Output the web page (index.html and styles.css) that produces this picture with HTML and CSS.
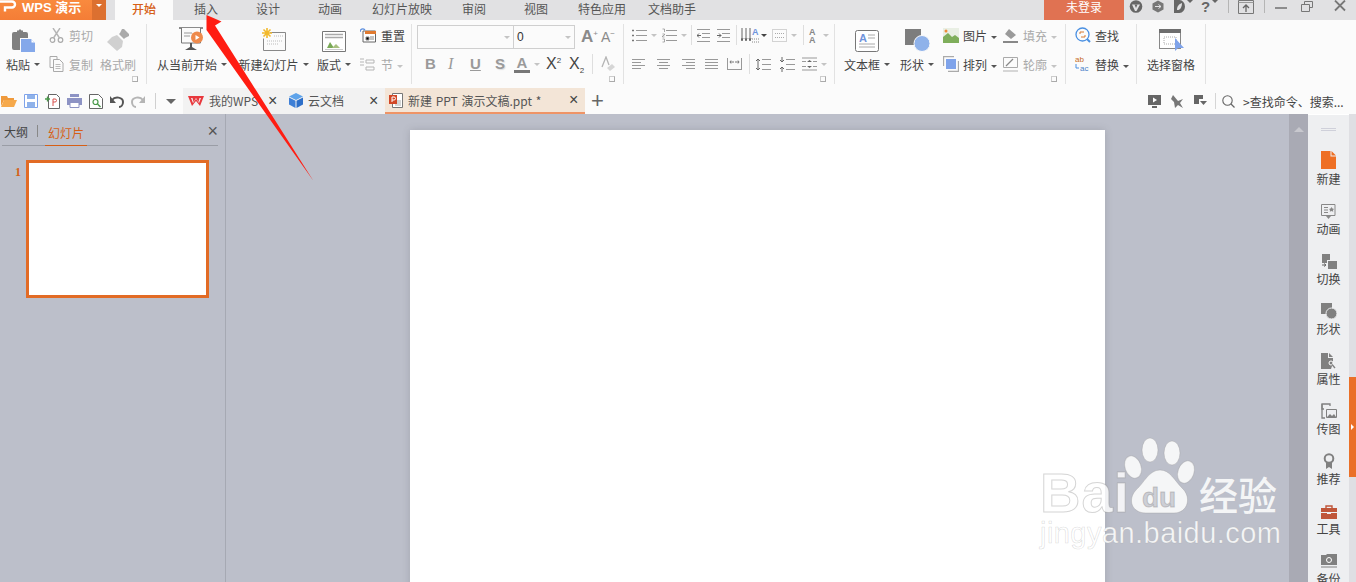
FILE: index.html
```html
<!DOCTYPE html>
<html lang="zh-CN">
<head>
<meta charset="utf-8">
<title>WPS 演示</title>
<link rel="stylesheet" href="styles.css">
</head>
<body>
<div class="app">
  <header class="titlebar">
    <div class="brand">
      <svg class="brand-logo" width="18" height="12" viewBox="0 0 18 12"><path d="M0 1.500h12a3 3 0 0 1 0 6H5v4" fill="none" stroke="#fff" stroke-width="2.400"/></svg>
      <span class="brand-name">WPS 演示</span>
    </div>
    <div class="brand-drop"><i class="caret white"></i></div>
    <nav class="menu">
      <span class="m58 active">开始</span>
      <span class="m66">插入</span>
      <span class="m58">设计</span>
      <span class="m66">动画</span>
      <span class="m78">幻灯片放映</span>
      <span class="m66">审阅</span>
      <span class="m58">视图</span>
      <span class="m74">特色应用</span>
      <span class="m66">文档助手</span>
    </nav>
    <div class="login">未登录</div>
    <div class="winbtns">
      <svg class="w22" width="14" height="14" viewBox="0 0 14 14"><circle cx="7" cy="6.500" r="6.300" fill="#666"/><path d="M3 4.500h8L7.500 11H6z" fill="#e1e1e3"/><path d="M5.500 4.500h3L7 8z" fill="#666"/></svg>
      <svg class="w22" width="14" height="14" viewBox="0 0 14 14"><path d="M7 .500 12.500 3.500v6L7 12.500l-5.500-3v-6z" fill="#777"/><path d="M4 6.500h6M7.500 4.500l2.500 2-2.500 2" stroke="#e1e1e3" fill="none"/></svg>
      <span class="winmenu d"><svg width="11" height="13" viewBox="0 0 11 13"><path d="M0 0h5.500a5.500 6.500 0 0 1 0 13H0z" fill="#666"/><path d="M3 10c0-4 2-6 5-7 0 3-1 6-3.500 7z" fill="#e1e1e3"/></svg><i class="caret small"></i></span>
      <span class="winmenu help">?<i class="caret small"></i></span>
      <span class="wsep"></span>
      <svg class="w34" width="16" height="14" viewBox="0 0 16 14"><path d="M.5.500h15v13H.500z" fill="none" stroke="#777"/><path d="M.5 2.500h15" stroke="#999"/><path d="M8 12V5M5 8l3-3 3 3" fill="none" stroke="#666" stroke-width="1.300"/></svg>
      <span class="wsep"></span>
      <svg class="w34b" width="12" height="12" viewBox="0 0 12 12"><path d="M0 8h12" stroke="#777" stroke-width="1.600"/></svg>
      <svg class="w26b" width="12" height="12" viewBox="0 0 12 12"><path d="M.5 4.500h8v7h-8zM3.500 4.500v-3h8v6h-3" fill="none" stroke="#777"/></svg>
      <svg class="w34c" width="12" height="12" viewBox="0 0 12 12"><path d="M1 .500l10 10M11 .500 1 10.500" stroke="#777" stroke-width="1.800"/></svg>
    </div>
  </header>

  <section class="ribbon">
    <div class="group g1">
      <div class="bigicon">
        <svg width="25" height="23" viewBox="0 0 25 23"><path d="M1 5a2 2 0 0 1 2-2h3V1.500h1.500L9 0l1.500 1.500H12V3h3a2 2 0 0 1 2 2v4H9v12H3a2 2 0 0 1-2-2z" fill="#808080"/><path d="M10 10h10l4 4v9H10z" fill="#84a8ea"/><path d="M20.500 10.500v3h3z" fill="#fff"/></svg>
      </div>
      <div class="small dim">
        <svg width="15" height="15" viewBox="0 0 15 15"><circle cx="3.500" cy="12" r="2.300" fill="none" stroke="#aaa" stroke-width="1.200"/><circle cx="11.500" cy="12" r="2.300" fill="none" stroke="#aaa" stroke-width="1.200"/><path d="M4.500 10 11 0M10.500 10 4 0" stroke="#b5b5b5" stroke-width="1.400"/></svg>
        <span>剪切</span>
      </div>
      <div class="bigicon">
        <svg width="24" height="24" viewBox="0 0 24 24"><path d="M16 1l2 0 5 5 0 2-4 2-1 1-5-5 1-1z" fill="#aaa"/><path d="M11 7l6 6-1 6-5 4-10-9 5-5z" fill="#d0d0d0"/></svg>
      </div>
      <div class="label">粘贴<i class="caret"></i></div>
      <div class="small dim">
        <svg width="15" height="16" viewBox="0 0 15 16"><path d="M1 .500h7v3M1 .500v11h3M4.500 3.500h6l3.500 3.500v8.500H4.500z" fill="none" stroke="#aaa"/><path d="M6.500 8.500h5M6.500 10.500h5M6.500 12.500h5" stroke="#bbb"/></svg>
        <span>复制</span>
      </div>
      <div class="label dim">格式刷</div>
      <i class="launcher"></i>
    </div>

    <div class="group g2">
      <div class="bigicon">
        <svg width="26" height="25" viewBox="0 0 26 25"><path d="M0 1h24" stroke="#666" stroke-width="1.500"/><path d="M2.500 1v15h19V1" fill="#fbfbfb" stroke="#777"/><path d="M5 6h8M5 9h6" stroke="#999"/><circle cx="18" cy="10.500" r="6" fill="#ee8a4c"/><path d="M16.500 8v5l4-2.500z" fill="#fff"/><path d="M11 16h2v4h-2zM6 23l5-3h2l5 3z" fill="#555"/></svg>
      </div>
      <div class="bigicon">
        <svg width="24" height="24" viewBox="0 0 24 24"><path d="M8 4.500h15.500v18h-22v-12" fill="#fbfbfb" stroke="#888"/><path d="M12 8h9M5 13h16M5 16h11" stroke="#bbb" stroke-dasharray="1 1"/><path d="M5 0v10M0 5h10M1.500 1.500l7 7M8.500 1.500l-7 7" stroke="#f2b92c" stroke-width="1.600"/></svg>
      </div>
      <div class="bigicon">
        <svg width="24" height="21" viewBox="0 0 24 21"><path d="M.5.500h23v20H.500z" fill="#fff" stroke="#777"/><path d="M3 3.500h18M3 6.500h18" stroke="#aaa" stroke-width="1.300"/><path d="M5 17l3-6 4 6z" fill="#79a956"/><path d="M10 17l4-4 4 4z" fill="#a8c080"/><path d="M3 18.500h18" stroke="#ccc"/></svg>
      </div>
      <div class="small">
        <svg width="16" height="15" viewBox="0 0 16 15"><path d="M3 3h12.500v11H3z" fill="#fff" stroke="#666"/><path d="M5 3h11v3H5z" fill="#e07a30"/><path d="M6 9h3v3H6zM10 9h4M10 11h4" stroke="#888"/><path d="M0 4c0-3 3-4 5-2" fill="none" stroke="#5d8fdf" stroke-width="1.300"/></svg>
        <span>重置</span>
      </div>
      <div class="label">从当前开始<i class="caret"></i></div>
      <div class="label">新建幻灯片<i class="caret"></i></div>
      <div class="label">版式<i class="caret"></i></div>
      <div class="small dim">
        <svg width="16" height="15" viewBox="0 0 16 15"><path d="M0 2h4M0 5h4M0 8h4M6 3h8v3H6zM6 10h8v3H6z" fill="none" stroke="#b5b5b5"/></svg>
        <span>节<i class="caret light"></i></span>
      </div>
    </div>

    <div class="group g3">
      <div class="fontrow">
        <div class="combo wide"><i class="caret light"></i></div>
        <div class="combo narrow"><span>0</span><i class="caret light"></i></div>
        <span class="grow up">A<sup>+</sup></span>
        <span class="grow dn">A<sup>−</sup></span>
      </div>
      <div class="fmtrow">
        <span class="f b">B</span>
        <span class="f i">I</span>
        <span class="f u">U</span>
        <span class="f s">S</span>
        <span class="f col">A</span><i class="caret light"></i>
        <span class="f x">X<sup>2</sup></span>
        <span class="f x">X<sub>2</sub></span>
        <span class="vline"></span>
        <svg class="eraser" width="15" height="16" viewBox="0 0 15 16"><path d="M1 11 5 1l3 8" fill="none" stroke="#b5b5b5" stroke-width="1.300"/><path d="M6 12l5-4 3 3-5 4z" fill="#d6d6d6"/></svg>
      </div>
      <i class="launcher"></i>
    </div>

    <div class="group g4">
      <div class="iconrow top">
        <svg class="ic" width="15" height="13" viewBox="0 0 15 13"><path d="M4 1.500h11M4 6.500h11M4 11.500h11" stroke="#999"/><path d="M0 1.500h2M1 .5v2M0 6.500h2M1 5.500v2M0 11.500h2M1 10.500v2" stroke="#777"/></svg><i class="caret light"></i>
        <svg class="ic ml5" width="15" height="15" viewBox="0 0 15 15"><path d="M4 2.500h11M4 7.500h11M4 12.500h11" stroke="#999"/><path d="M.5 1h2v3M.5 6h2v1l-2 1v1h2M.5 11h2v3h-2" fill="none" stroke="#888" stroke-width=".7"/></svg><i class="caret light"></i>
        <span class="vline ml4"></span>
        <svg class="ic ml5" width="13" height="13" viewBox="0 0 13 13"><path d="M0 .5h13M5 4.500h8M5 8.500h8M0 12.500h13" stroke="#999"/><path d="M4 6.500H0M2 4.500l-2 2 2 2" fill="none" stroke="#666"/></svg>
        <svg class="ic ml7" width="13" height="13" viewBox="0 0 13 13"><path d="M0 .5h13M5 4.500h8M5 8.500h8M0 12.500h13" stroke="#999"/><path d="M0 6.500h4M2 4.500l2 2-2 2" fill="none" stroke="#666"/></svg>
        <span class="vline ml6"></span>
        <svg class="ic ml4" width="19" height="16" viewBox="0 0 19 16"><path d="M1 1v12M5 1v12M9 1v12" stroke="#666"/><path d="M0 11l1 3 1-3M4 11l1 3 1-3M8 11l1 3 1-3" stroke="#666" fill="none"/><text class="tinya" x="11" y="8">A</text><path d="M11 12h8M11 15h8" stroke="#888" stroke-dasharray="1 1"/></svg><i class="caret dark tight"></i>
        <svg class="ic ml5" width="15" height="13" viewBox="0 0 15 13"><path d="M.5.500h14v12H.500z" fill="none" stroke="#aaa" stroke-dasharray="1 1"/><path d="M3 4.500h9M3 8.500h9" stroke="#aaa" stroke-dasharray="1 1"/></svg><i class="caret light"></i>
        <span class="vline ml6"></span>
        <svg class="ic ml3" width="12" height="15" viewBox="0 0 12 15"><text class="tinya gray" x="2" y="7">A</text><text class="tinya gray" x="2" y="15">A</text></svg><i class="caret light"></i>
      </div>
      <div class="iconrow bottom">
        <svg class="ic" width="13" height="11" viewBox="0 0 13 11"><path d="M0 .5h13M0 3.500h9M0 6.500h13M0 9.500h9" stroke="#999"/></svg>
        <svg class="ic ml12" width="13" height="11" viewBox="0 0 13 11"><path d="M0 .5h13M2 3.500h9M0 6.500h13M2 9.500h9" stroke="#999"/></svg>
        <svg class="ic ml12" width="13" height="11" viewBox="0 0 13 11"><path d="M0 .5h13M4 3.500h9M0 6.500h13M4 9.500h9" stroke="#999"/></svg>
        <svg class="ic ml10" width="13" height="11" viewBox="0 0 13 11"><path d="M0 .5h13M0 3.500h13M0 6.500h13M0 9.500h13" stroke="#999"/></svg>
        <svg class="ic ml9" width="15" height="12" viewBox="0 0 15 12"><path d="M.5 0v12M14.500 0v12M0 11.500h15" stroke="#999"/><path d="M3 4h4M4 2.500 3 4l1 1.500M12 4H8M11 2.500 12 4l-1 1.500" fill="none" stroke="#777"/></svg>
        <span class="vline ml7"></span>
        <svg class="ic ml5" width="16" height="15" viewBox="0 0 16 15"><path d="M7 2.500h9M7 7.500h9M7 12.500h9" stroke="#999"/><path d="M3 2v11M1 4l2-2 2 2M1 11l2 2 2-2" fill="none" stroke="#666"/></svg>
        <svg class="ic ml8" width="16" height="15" viewBox="0 0 16 15"><path d="M7 2.500h9M7 7.500h9M7 12.500h9" stroke="#999"/><path d="M3 0v5M1 3l2 2 2-2M3 15v-5M1 12l2-2 2 2" fill="none" stroke="#666"/></svg>
        <svg class="ic ml7" width="15" height="14" viewBox="0 0 15 14"><path d="M0 1h15M0 13h15M0 4.500h4M11 4.500h4M0 9.500h4M11 9.500h4" stroke="#999"/><path d="M5 5h5L7.500 3zM5 9h5l-2.500 2z" fill="#666"/></svg><i class="caret light"></i>
      </div>
      <i class="launcher"></i>
    </div>

    <div class="group g5">
      <div class="bigicon">
        <svg width="24" height="22" viewBox="0 0 24 22"><rect x=".5" y=".5" width="23" height="21" rx="2" fill="#fff" stroke="#777"/><text class="boxa" x="4" y="12">A</text><path d="M13 5h7M13 8h7M4 14h16M4 17h16" stroke="#aaa"/></svg>
      </div>
      <div class="bigicon">
        <svg width="25" height="24" viewBox="0 0 25 24"><path d="M0 1h16v16H0z" fill="#7d7d7d"/><circle cx="17" cy="15.500" r="8" fill="#8fb2ea" stroke="#fbfbfb"/></svg>
      </div>
      <div class="small col3">
        <svg width="16" height="15" viewBox="0 0 16 15"><path d="M0 0h16v15H0z" fill="#e9efe4"/><path d="M0 15V9l5-4 4 4 3-2 4 3v5z" fill="#7fae5b"/><circle cx="3" cy="3" r="1.500" fill="#ef8c3a"/></svg>
        <span>图片<i class="caret"></i></span>
      </div>
      <div class="small dim">
        <svg width="15" height="15" viewBox="0 0 15 15"><path d="M6 1 13 7l-5 4-6-5z" fill="#9a9a9a"/><path d="M0 13h15v2H0z" fill="#888"/></svg>
        <span>填充<i class="caret light"></i></span>
      </div>
      <div class="label">文本框<i class="caret"></i></div>
      <div class="label">形状<i class="caret"></i></div>
      <div class="small col3">
        <svg width="16" height="16" viewBox="0 0 16 16"><path d="M.5 10V.5H11M5 15.500h10.500V5" fill="none" stroke="#aaa" stroke-width="1.300"/><path d="M3 3h10v10H3z" fill="#7fa3ea"/></svg>
        <span>排列<i class="caret"></i></span>
      </div>
      <div class="small dim">
        <svg width="15" height="15" viewBox="0 0 15 15"><path d="M.5.500h14v10H.500z" fill="none" stroke="#aaa"/><path d="M3 9l7-7" stroke="#888" stroke-width="1.300"/><path d="M0 13h15v2H0z" fill="#d6d6d6"/></svg>
        <span>轮廓<i class="caret light"></i></span>
      </div>
      <i class="launcher"></i>
    </div>

    <div class="group g6">
      <div class="small">
        <svg width="16" height="16" viewBox="0 0 16 16"><circle cx="7.500" cy="7.500" r="6.500" fill="none" stroke="#4a90e2" stroke-width="1.300"/><path d="M12 12l3 3" stroke="#4a90e2" stroke-width="2"/><path d="M5 5h4M5 5v2M10 10H6M10 10V8" stroke="#d9792f" fill="none"/></svg>
        <span>查找</span>
      </div>
      <div class="small">
        <svg width="16" height="16" viewBox="0 0 16 16"><text class="abc or" x="0" y="6">ab</text><text class="abc" x="5" y="15">ac</text><path d="M1 8v4h3" fill="none" stroke="#4a90e2"/></svg>
        <span>替换<i class="caret"></i></span>
      </div>
    </div>

    <div class="group g7">
      <div class="bigicon">
        <svg width="25" height="23" viewBox="0 0 25 23"><rect x=".5" y=".5" width="21" height="19" fill="#fff" stroke="#888"/><path d="M0 0h22v4H0z" fill="#6e6e6e"/><path d="M5 8h12v7H5z" fill="none" stroke="#aaa" stroke-dasharray="1 1"/><path d="M16 9v13l3-3h6z" fill="#7fa3ea"/></svg>
      </div>
      <div class="label">选择窗格</div>
    </div>
  </section>

  <section class="tabbar">
    <div class="qat">
      <svg width="16" height="12" viewBox="0 0 16 12"><path d="M0 1h6l1 2h6v2H3L0 11z" fill="#ef9a3c"/><path d="M3 5h13l-3 7H0z" fill="#f6a94b"/></svg>
      <svg width="14" height="14" viewBox="0 0 14 14"><path d="M.5.500h13v13H.500z" fill="#fff" stroke="#7fa3ea"/><path d="M3 1h8v4H3z" fill="#8fb2ea"/><path d="M3 8h8v5.500H3z" fill="#8fb2ea"/></svg>
      <svg width="15" height="15" viewBox="0 0 15 15"><path d="M3.500.500h8l3 3v11h-11z" fill="#fff" stroke="#666"/><path d="M0 5h5M2.500 2.500v5" stroke="#4a9a4a" stroke-width="1.300"/><path d="M8 12V5h2a1.500 1.500 0 0 1 0 3H8" fill="none" stroke="#d9534f"/></svg>
      <svg width="15" height="14" viewBox="0 0 15 14"><path d="M3 0h9v3H3zM0 4h15v7H0z" fill="#8d93c4"/><path d="M3 8.500h9v5H3z" fill="#fff" stroke="#8d93c4"/></svg>
      <svg width="14" height="15" viewBox="0 0 14 15"><path d="M.5.500h9l4 4v10H.500z" fill="#fff" stroke="#666"/><circle cx="6.500" cy="8" r="2.500" fill="none" stroke="#4a9a4a" stroke-width="1.200"/><path d="M8.500 10l3 3" stroke="#4a9a4a" stroke-width="1.400"/></svg>
      <svg width="14" height="13" viewBox="0 0 14 13"><path d="M2 5c3-4 11-3 11 2 0 3-2 5-4 5" fill="none" stroke="#555" stroke-width="2"/><path d="M0 1v7h6z" fill="#555"/></svg>
      <svg width="14" height="13" viewBox="0 0 14 13"><path d="M12 5C9 1 1 2 1 7c0 3 2 5 4 5" fill="none" stroke="#b5b5b5" stroke-width="2"/><path d="M14 1v7H8z" fill="#b5b5b5"/></svg>
    </div>
    <span class="qsep"></span>
    <i class="qdrop"></i>
    <div class="tab">
      <svg width="16" height="12" viewBox="0 0 16 12"><path d="M0 1h16l-4 10-4-5-4 5z" fill="#e8383d"/><path d="M3 3h1.500l1 4L8 3l2.500 4 1-4H13l-2 5-3-4-3 4z" fill="#f2f2f2"/></svg>
      <span class="tabname">我的WPS</span><span class="x">×</span>
    </div>
    <div class="tab">
      <svg width="14" height="15" viewBox="0 0 14 15"><path d="M7 0l7 3.500L7 7 0 3.500z" fill="#5ea3ea"/><path d="M0 4.500l6.500 3.300V15L0 11.500z" fill="#3e7fd6"/><path d="M14 4.500 7.500 7.800V15l6.500-3.500z" fill="#2d6fc9"/></svg>
      <span class="tabname">云文档</span><span class="x">×</span>
    </div>
    <div class="tab current">
      <svg width="14" height="15" viewBox="0 0 14 15"><path d="M3.500.500h10v14h-10z" fill="#fff" stroke="#777"/><path d="M6 8h6M6 10h6M6 12h6" stroke="#aaa"/><path d="M0 2h8v9H0z" fill="#d24726"/><path d="M3 9V4h2a1.500 1.500 0 0 1 0 3H3" fill="none" stroke="#fff"/></svg>
      <span class="tabname">新建 PPT 演示文稿.ppt *</span><span class="x">×</span>
    </div>
    <span class="plus">+</span>
    <div class="tools">
      <svg width="13" height="13" viewBox="0 0 13 13"><path d="M0 0h13v10H0z" fill="#666"/><path d="M5 2.500v5l4-2.500z" fill="#fff"/><path d="M4 12h5" stroke="#666" stroke-width="2"/></svg>
      <svg width="13" height="13" viewBox="0 0 13 13"><path d="M2 0l5 6 5-2-3 4 3 5-5-3-3 3-1-6-3-3z" fill="#777"/></svg>
      <svg width="13" height="12" viewBox="0 0 13 12"><path d="M0 0h9v4H5v5H0z" fill="#666"/><path d="M6 6h7l-3.500 4z" fill="#666"/></svg>
      <span class="tsep"></span>
      <svg class="finder" width="13" height="13" viewBox="0 0 13 13"><circle cx="5.500" cy="5.500" r="4.700" fill="none" stroke="#666" stroke-width="1.100"/><path d="M9 9l3.500 3.500" stroke="#666" stroke-width="1.300"/></svg>
      <span class="searchtext">&gt;查找命令、搜索...</span>
    </div>
  </section>

  <main class="workspace">
    <aside class="outline">
      <div class="outline-head">
        <span class="ot">大纲</span><span class="ob"></span><span class="ot on">幻灯片</span><span class="ox">×</span>
      </div>
      <div class="thumbrow">
        <span class="num">1</span>
        <div class="thumb"></div>
      </div>
    </aside>
    <div class="stage"><div class="slide"></div></div>
    <div class="scrollbar"><i class="scrollup"></i></div>
    <div class="sidepanel">
      <div class="handle"></div>
      <div class="side"><svg width="15" height="18" viewBox="0 0 15 18"><path d="M0 0h9.500v5.500H15V18H0zM10.500 0 15 4.500h-4.500z" fill="#ee6f24"/></svg><span>新建</span></div>
      <div class="side"><svg width="15" height="15" viewBox="0 0 15 15"><path d="M.5.500h13.500v11H.500z" fill="none" stroke="#888"/><path d="M3 3.500h4M3 6h4M3 8.500h4" stroke="#888"/><path d="M10.500 3l1 1.600 1.600.3-1.100 1.200.2 1.700-1.700-.7-1.700.7.200-1.700L8 4.900l1.600-.3z" fill="#888"/><path d="M5 12h5l-2.500 3z" fill="#888"/></svg><span>动画</span></div>
      <div class="side"><svg width="16" height="15" viewBox="0 0 16 15"><path d="M1 0h8v6H6v3H1z" fill="#808080"/><path d="M7 7h9v8H7z" fill="#808080"/><path d="M1 11h4M3 9.500 5 11l-2 1.500" fill="none" stroke="#666"/></svg><span>切换</span></div>
      <div class="side"><svg width="16" height="16" viewBox="0 0 16 16"><path d="M0 0h11v11H0z" fill="#808080"/><circle cx="10.500" cy="10.500" r="5.500" fill="#808080" stroke="#eeeff1"/></svg><span>形状</span></div>
      <div class="side"><svg width="15" height="16" viewBox="0 0 15 16"><path d="M0 0h7v5h5v5l-2 6H0zM8 0l4 4H8z" fill="#808080"/><circle cx="10" cy="10" r="2" fill="none" stroke="#fff"/><path d="M11 11.500l3 3.500" stroke="#808080" stroke-width="1.300"/></svg><span>属性</span></div>
      <div class="side"><svg width="16" height="16" viewBox="0 0 16 16"><path d="M3 6H1V1h8v2" fill="none" stroke="#808080" stroke-width="1.300"/><path d="M1 1v14h3" fill="none" stroke="#808080" stroke-width="1.300"/><path d="M5.500 6.500h10v8h-10z" fill="#eeeff1" stroke="#808080"/><path d="M6 14l3-3 2 2 2-2 2 3z" fill="#808080"/></svg><span>传图</span></div>
      <div class="side"><svg width="12" height="16" viewBox="0 0 12 16"><circle cx="6" cy="5.500" r="4.300" fill="none" stroke="#808080" stroke-width="2"/><path d="M3 9v7l3-2 3 2V9" fill="#808080"/></svg><span>推荐</span></div>
      <div class="side"><svg width="16" height="14" viewBox="0 0 16 14"><path d="M5 3V1h6v2" fill="none" stroke="#c0563a" stroke-width="1.400"/><path d="M0 3h16v4H0zM0 8h6v1h4V8h6v6H0z" fill="#c0563a"/></svg><span>工具</span></div>
      <div class="side"><svg width="16" height="16" viewBox="0 0 16 16"><path d="M0 2h5l1-1h10v11H0z" fill="#808080"/><circle cx="8" cy="7" r="2.500" fill="none" stroke="#fff"/><path d="M0 14h16" stroke="#808080"/></svg><span>备份</span></div>
    </div>
    <div class="edge"><i class="edgetab"></i></div>
  </main>

  <svg class="arrow" width="120" height="175" viewBox="200 10 120 175"><path d="M206.500 15 221.500 21.500 215 25.500 313.500 181 206.500 30z" fill="#ff1d12"/></svg>

  <svg class="watermark" width="250" height="125" viewBox="1035 435 250 125">
    <text class="wm-bai" x="1040" y="512">Bai</text>
    <ellipse class="wm" cx="1133" cy="467" rx="8" ry="11.500" transform="rotate(-20 1133 467)"/>
    <ellipse class="wm" cx="1150" cy="450" rx="8" ry="12"/>
    <ellipse class="wm" cx="1172" cy="453" rx="8" ry="12"/>
    <ellipse class="wm" cx="1186" cy="472" rx="8" ry="11.500" transform="rotate(20 1186 472)"/>
    <path class="wm" d="M1160 470c10 0 14 10 22 18 10 9 6 25-8 25h-28c-14 0-19-13-10-23 8-7 13-20 24-20z"/>
    <text class="wm-du" x="1142" y="507">du</text>
    <text class="wm-jy" x="1199" y="510">经验</text>
    <text class="wm-url" x="1040" y="543">jingyan.baidu.com</text>
  </svg>
</div>
</body>
</html>
```
FILE: styles.css
```css
* { box-sizing: border-box; }
html, body { margin: 0; padding: 0; width: 1356px; height: 582px; overflow: hidden; }
body { font-family: "Noto Sans CJK SC", "Liberation Sans", sans-serif; font-size: 12px; color: #444; background: #bcbfca; }
svg { display: block; flex: none; }
i { display: block; font-style: normal; }
.app { position: relative; width: 1356px; height: 582px; overflow: hidden; display: flex; flex-direction: column; }

.caret { width: 0; height: 0; border: 3px solid transparent; border-top: 3px solid #555; border-bottom: 0; margin-left: 4px; display: inline-block; vertical-align: middle; flex: none; }
.caret.white { border-top-color: #fff; margin: 0; border-width: 3px 3px 0; }
.caret.light { border-top-color: #c4c4c4; }
.caret.dark { border-top-color: #444; }
.caret.tight { margin-left: 1px; }
.caret.small { border-top-color: #666; margin-left: 2px; }

.titlebar { height: 20px; background: #e1e1e3; display: flex; flex: none; }
.brand { width: 92px; height: 20px; background: linear-gradient(#f98a3e, #f47d36); display: flex; align-items: flex-start; }
.brand-logo { margin-top: 0; }
.brand-name { color: #fff; font: bold 13px/15px "Liberation Sans", "Noto Sans CJK SC", sans-serif; margin-left: 4px; }
.brand-drop { width: 14px; height: 20px; background: #dc7030; display: flex; justify-content: center; padding-top: 4px; }
.menu { display: flex; margin-left: 9px; height: 20px; }
.menu span { display: block; text-align: center; line-height: 17px; color: #555; }
.m58 { width: 58px; } .m66 { width: 66px; } .m78 { width: 78px; } .m74 { width: 74px; }
.menu .active { background: #fbfbfb; color: #d65f16; font-weight: 500; }
.login { margin-left: auto; width: 80px; height: 20px; background: #e07252; color: #fff; text-align: center; line-height: 13px; }
.winbtns { width: 232px; display: flex; align-items: flex-start; padding-top: 0; }
.w22 { margin-left: 5px; margin-right: 3px; }
.winmenu { display: flex; align-items: center; height: 13px; }
.winmenu.d { margin-left: 6px; }
.help { margin-left: 8px; font: bold 15px/13px "Liberation Sans", sans-serif; color: #666; }
.wsep { width: 1px; height: 13px; background: #b5b5b5; margin-left: 10px; }
.w34 { margin: 0 0 0 9px; }
.w34b { margin-left: 10px; }
.w26b { margin-left: 14px; }
.w34c { margin-left: 21px; }

.ribbon { height: 68px; background: #fbfbfb; display: flex; padding-top: 4px; flex: none; }
.group { position: relative; height: 60px; border-right: 1px solid #e2e2e2; display: grid; grid-template-rows: 28px 24px; flex: none; color: #444; }
.g1 { width: 147px; grid-template-columns: 46px 50px 44px; }
.g2 { width: 265px; grid-template-columns: 90px 73px 48px 53px; }
.g3 { width: 212px; display: block; padding-left: 5px; }
.g4 { width: 211px; display: block; padding-left: 8px; }
.g5 { width: 231px; grid-template-columns: 64px 36px 68px 62px; }
.g6 { width: 71px; grid-template-columns: 1fr; padding-left: 9px; }
.g7 { width: 69px; grid-template-columns: 1fr; }

.bigicon { display: flex; justify-content: center; align-items: flex-end; }
.label { display: flex; justify-content: center; align-items: center; white-space: nowrap; }
.small { display: flex; align-items: center; height: 22px; gap: 5px; white-space: nowrap; align-self: start; }
.group > .small:nth-child(n+5), .g6 > .small:nth-child(2) { height: 24px; align-self: center; }
.dim { color: #a9a9a9; }
.launcher { position: absolute; right: 8px; bottom: 2px; width: 6px; height: 6px; border: 1px solid #aaa; border-top-color: #ccc; border-left-color: #ccc; }
.g2 .small { margin-left: 2px; }
.g1 .small { margin-left: 3px; }
.col3 { margin-left: 8px; gap: 4px; }

.fontrow { display: flex; height: 28px; align-items: flex-start; padding-top: 1px; }
.combo { height: 24px; border: 1px solid #cfcfcf; display: flex; align-items: center; justify-content: space-between; padding: 0 3px; background: #fbfbfb; }
.combo.wide { width: 97px; justify-content: flex-end; }
.combo.narrow { width: 62px; margin-left: -1px; font: 12px "Liberation Sans", sans-serif; color: #333; }
.grow { color: #8a8a8a; font: bold 17px/24px "Liberation Sans", sans-serif; display: block; width: 20px; }
.grow.up { margin-left: 6px; }
.grow.dn { font-size: 14px; font-weight: 400; }
.grow sup { font-size: 8px; vertical-align: 6px; line-height: 0; font-weight: 400; }
.fmtrow { display: flex; height: 24px; align-items: center; padding-left: 8px; color: #9a9a9a; font-family: "Liberation Sans", sans-serif; }
.f { display: block; font-size: 15px; font-weight: bold; line-height: 18px; }
.f.b { width: 23px; }
.f.i { width: 22px; font-style: italic; font-weight: 400; font-family: "Liberation Serif", serif; font-size: 16px; }
.f.u { width: 25px; text-decoration: underline; }
.f.s { width: 19px; text-shadow: 1px 1px 1px #ddd; }
.f.col { width: 16px; border-bottom: 3px solid #777; line-height: 14px; font-size: 15px; text-align: center; }
.f.x { width: 23px; }
.caret + .f.x { margin-left: 6px; }
.f sup, .f sub { font-size: 8px; line-height: 0; }
.vline { display: block; width: 1px; height: 20px; background: #dedede; flex: none; }
.eraser { margin-left: 8px; }

.iconrow { display: flex; align-items: center; }
.iconrow.top { height: 22px; margin-bottom: 6px; }
.iconrow.bottom { height: 24px; }
.ml3 { margin-left: 3px; } .ml4 { margin-left: 4px; } .ml5 { margin-left: 5px; } .ml6 { margin-left: 6px; } .ml7 { margin-left: 7px; } .ml8 { margin-left: 8px; } .ml9 { margin-left: 9px; } .ml10 { margin-left: 10px; } .ml12 { margin-left: 12px; }
.tinya { font: bold 9px "Liberation Sans", sans-serif; fill: #6f94dc; }
.tinya.gray { fill: #888; }
.boxa { font: bold 11px "Liberation Sans", sans-serif; fill: #6f94dc; }
.abc { font: 8px "Liberation Sans", sans-serif; fill: #4a80c8; }
.abc.or { fill: #c76b1f; }
.g6 .small { gap: 4px; }

.tabbar { height: 26px; background: #fbfbfb; display: flex; align-items: stretch; flex: none; }
.qat { display: flex; width: 150px; align-items: center; gap: 7px; padding-left: 1px; }
.qsep { display: block; width: 1px; height: 16px; background: #d0d0d0; margin: 5px 0 0 5px; }
.qdrop { width: 0; height: 0; border: 5px solid transparent; border-top: 5px solid #666; border-bottom: 0; margin: 11px 7px 0 10px; }
.tab { height: 26px; width: 101px; display: flex; align-items: center; background: #f2f2f2; padding: 0 0 1px 5px; color: #555; gap: 5px; }
.tab.current { width: 200px; background: #f3e5d7; border-bottom: 2px solid #ef9466; padding: 0 0 0 4px; }
.tabname { flex: 1; white-space: nowrap; word-spacing: 1px; }
.x { font: 16px/16px "Liberation Sans", sans-serif; color: #444; width: 16px; }
.plus { font: 300 22px/26px "Liberation Sans", sans-serif; color: #666; margin-left: 6px; }
.tools { margin-left: auto; display: flex; align-items: center; gap: 10px; width: 210px; padding-left: 2px; }
.tsep { display: block; width: 1px; height: 16px; background: #d5d5d5; margin-left: -2px; }
.finder { margin-left: -4px; }
.searchtext { white-space: nowrap; color: #444; margin-left: -2px; }

.workspace { flex: 1; display: flex; min-height: 0; }
.outline { width: 226px; border-right: 1px solid #a6a9b3; padding: 0 7px 0 2px; flex: none; }
.outline-head { height: 32px; display: flex; align-items: center; border-bottom: 1px solid #9a9da6; padding: 3px 0 0 2px; position: relative; }
.ot { color: #444; }
.ot.on { color: #d65f16; height: 28px; line-height: 30px; border-bottom: 1px solid #d65f16; margin-bottom: -1px; padding: 0 3px; margin-left: -2px; }
.ob { display: block; width: 1px; height: 12px; background: #888; margin: 0 9px; }
.ox { margin-left: auto; font: 18px "Liberation Sans", sans-serif; color: #555; }
.thumbrow { display: flex; margin-top: 14px; }
.num { font: bold 12px/24px "Liberation Serif", serif; color: #d65f16; margin-left: 13px; width: 9px; }
.thumb { width: 183px; height: 138px; background: #fff; border: 3px solid #e26b25; margin-left: 2px; }
.stage { width: 1063px; padding: 16px 0 0 184px; flex: none; }
.slide { width: 695px; height: 560px; background: #fff; box-shadow: 0 0 7px rgba(90,90,100,.25); }
.scrollbar { width: 19px; background: #a9aab4; flex: none; display: flex; justify-content: center; padding-top: 13px; }
.scrollup { width: 0; height: 0; border: 5px solid transparent; border-bottom: 5px solid #c8c8ce; border-top: 0; }
.sidepanel { width: 41px; background: #eeeff1; flex: none; border-top: 1px solid #fff; }
.handle { height: 3px; width: 15px; margin: 13px auto 6px; border-top: 1px solid #cfd0da; border-bottom: 1px solid #cfd0da; }
.side { height: 50px; display: flex; flex-direction: column; align-items: center; justify-content: flex-end; color: #444; line-height: 17px; gap: 1px; }
.edge { width: 7px; background: #dfdfe3; flex: none; padding-top: 263px; }
.edgetab { width: 7px; height: 100px; background: #ea7028; position: relative; }
.edgetab::after { content: ""; position: absolute; left: 2px; top: 47px; border: 3px solid transparent; border-left: 3px solid #fff; border-right: 0; }

.arrow { position: absolute; left: 200px; top: 10px; }
.watermark { position: absolute; left: 1035px; top: 435px; }
.wm { fill: #fff; fill-opacity: .85; stroke: #999; stroke-opacity: .35; }
.wm-bai { font: bold 56px "Liberation Sans", sans-serif; fill: #fff; fill-opacity: .8; stroke: #888; stroke-opacity: .35; letter-spacing: 1px; }
.wm-du { font: bold 28px "Liberation Sans", sans-serif; fill: #c8cad2; fill-opacity: .9; stroke: #888; stroke-opacity: .4; }
.wm-jy { font: 500 39px "Noto Sans CJK SC", sans-serif; fill: #fff; fill-opacity: .85; }
.wm-url { font: 29px "Liberation Sans", sans-serif; fill: #fff; fill-opacity: .85; stroke: #888; stroke-opacity: .3; stroke-width: .6; letter-spacing: .45px; }
```
